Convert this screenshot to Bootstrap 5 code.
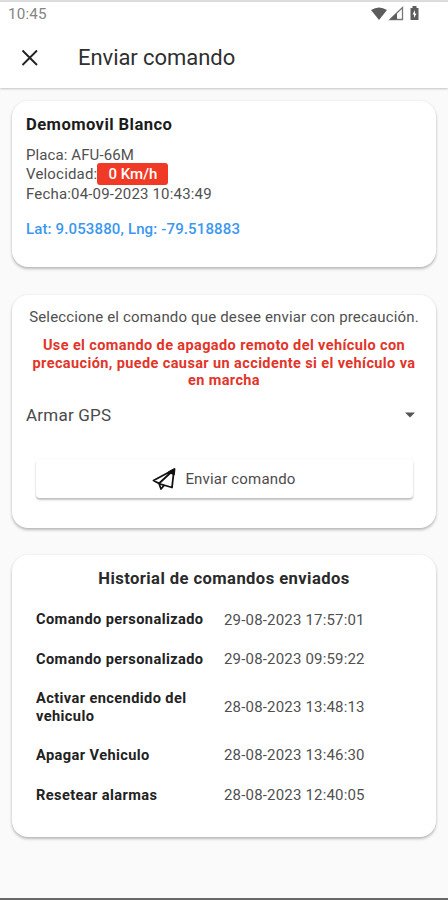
<!DOCTYPE html>
<html lang="es">
<head>
<meta charset="utf-8">
<meta name="viewport" content="width=device-width, initial-scale=1">
<title>Enviar comando</title>
<link href="https://cdn.jsdelivr.net/npm/bootstrap@5.3.0/dist/css/bootstrap.min.css" rel="stylesheet">
<style>
body{font-family:Roboto,"Liberation Sans",sans-serif;background:#fafafa;color:#505050;font-size:15px;line-height:20px;letter-spacing:.18px}
.screen{height:900px;border-top:2px solid #dedede;border-bottom:2px solid #686868}
.topbar{height:86px;background:#fff;box-shadow:0 1px 2px rgba(0,0,0,.22)}
.statusbar{height:24px;padding:0 28px 0 8px;color:#858585;font-size:15.2px}
.titlebar{height:64px;padding:0 20px}
.page-title{font-size:22px;line-height:28px;color:#2f2f2f;margin-left:38px;letter-spacing:-.06px}
main{padding:13px 12px 0}
.panel{border:0;border-radius:16px;background:#fff;box-shadow:0 2px 3px rgba(0,0,0,.25),0 0 3px rgba(0,0,0,.06)}
.panel + .panel{margin-top:27.5px}
.panel-vehicle{height:166px;padding:13px 14px}
.panel-command{height:233px;padding:12px 14px 0}
.panel-history{height:282px;padding:14px 24px 0}
.vehicle-name{font-size:16.6px;line-height:22px;font-weight:700;color:#1c1c1c;letter-spacing:.42px}
.plate{margin-top:1px;letter-spacing:.1px}
.plate,.speed-line,.date{height:19.6px}
.speed{background:#f03a26;color:#fff;height:22px;width:71px;border-radius:3px;font-weight:500;letter-spacing:0}
.coords{color:#3a98f0;font-weight:500;margin-top:15px;letter-spacing:.14px}
.intro{letter-spacing:.16px}
.warning{color:#e2352a;font-weight:700;font-size:14.5px;line-height:17.6px;letter-spacing:.39px;margin:10.5px 0 13.5px}
.picker{font-size:17px;color:#4a4a4a;height:24px;letter-spacing:.22px}
.caret-icon{margin-right:7px}
.send{width:377px;height:39px;background:#fff;border-radius:4px;box-shadow:0 2px 2px rgba(0,0,0,.24),0 0 2px rgba(0,0,0,.07);color:#4c4c4c;font-size:15px;letter-spacing:.18px;padding:0;margin-top:32px}
.send-label{margin-left:9px}
.history-title{font-size:16.6px;font-weight:700;color:#2a2a2a;letter-spacing:.42px}
.history-list{margin-top:11px}
.history-row{min-height:39.6px}
.history-row.tall{height:56.6px}
.cmd{width:188px;padding-right:12px;padding-top:1px;font-size:14.6px;line-height:17.5px;font-weight:700;color:#222;letter-spacing:.4px}
</style>
</head>
<body>
<div class="screen d-flex flex-column">
  <header class="topbar">
    <div class="statusbar d-flex align-items-center justify-content-between">
      <span class="clock">10:45</span>
      <svg width="50" height="16" viewBox="0 0 50 16" fill="#5c5c5c">
        <path d="M1 4Q9-1 17 4L9 14Z"/>
        <path d="M20 13.5 32.500 1.500V13.500Z" fill="none" stroke="#777" stroke-width="1.3"/>
        <path d="M20 13.500 27 7V13.500Z"/>
        <path fill-rule="evenodd" d="M42.500 0h4v2h2v12h-8V2h2ZM45 4 42.500 8.500H44V12L46.500 7.500H45Z"/>
      </svg>
    </div>
    <div class="titlebar d-flex align-items-center">
      <svg width="20" height="20" viewBox="0 0 20 20" fill="none" stroke="#222" stroke-width="1.9"><path d="M2.500 2.500 17 17M17 2.500 2.500 17"/></svg>
      <h1 class="page-title mb-0 fw-normal">Enviar comando</h1>
    </div>
  </header>
  <main>
    <section class="card panel panel-vehicle">
      <h2 class="vehicle-name mb-2">Demomovil Blanco</h2>
      <div class="plate">Placa: AFU-66M</div>
      <div class="d-flex align-items-center speed-line"><span>Velocidad:</span><span class="speed d-flex align-items-center justify-content-center">0 Km/h</span></div>
      <div class="date">Fecha:04-09-2023 10:43:49</div>
      <div class="coords">Lat: 9.053880, Lng: -79.518883</div>
    </section>
    <section class="card panel panel-command">
      <p class="intro mb-0 text-center text-nowrap">Seleccione el comando que desee enviar con precaución.</p>
      <p class="warning text-center text-nowrap">Use el comando de apagado remoto del vehículo con<br>precaución, puede causar un accidente si el vehículo va<br>en marcha</p>
      <div class="picker d-flex align-items-center justify-content-between">
        <span class="choice">Armar GPS</span>
        <svg class="caret-icon" width="10" height="6" viewBox="0 0 10 6" fill="#555"><path d="M0 .5h10L5 5.500Z"/></svg>
      </div>
      <button type="button" class="btn send d-flex align-items-center justify-content-center mx-auto">
        <svg width="24" height="24" viewBox="0 0 24 24" fill="none" stroke="#111" stroke-width="1.8" stroke-linejoin="round"><path d="M22 2.500 1.500 13.500 7 16.500 22 2.500M10 17.500 20 20.500 22 2.500M7 16.500 9 22 12 18.500M7 16.500 11 18"/><path d="M17 5 22.500 2 22 7.500Z" fill="#111"/></svg>
        <span class="send-label">Enviar comando</span>
      </button>
    </section>
    <section class="card panel panel-history">
      <h2 class="history-title text-center mb-0">Historial de comandos enviados</h2>
      <div class="history-list">
        <div class="history-row d-flex align-items-center"><span class="cmd">Comando personalizado</span><span class="when">29-08-2023 17:57:01</span></div>
        <div class="history-row d-flex align-items-center"><span class="cmd">Comando personalizado</span><span class="when">29-08-2023 09:59:22</span></div>
        <div class="history-row tall d-flex align-items-center"><span class="cmd">Activar encendido del vehiculo</span><span class="when">28-08-2023 13:48:13</span></div>
        <div class="history-row d-flex align-items-center"><span class="cmd">Apagar Vehiculo</span><span class="when">28-08-2023 13:46:30</span></div>
        <div class="history-row d-flex align-items-center"><span class="cmd">Resetear alarmas</span><span class="when">28-08-2023 12:40:05</span></div>
      </div>
    </section>
  </main>
</div>
<script src="https://cdn.jsdelivr.net/npm/bootstrap@5.3.0/dist/js/bootstrap.bundle.min.js"></script>
</body>
</html>
